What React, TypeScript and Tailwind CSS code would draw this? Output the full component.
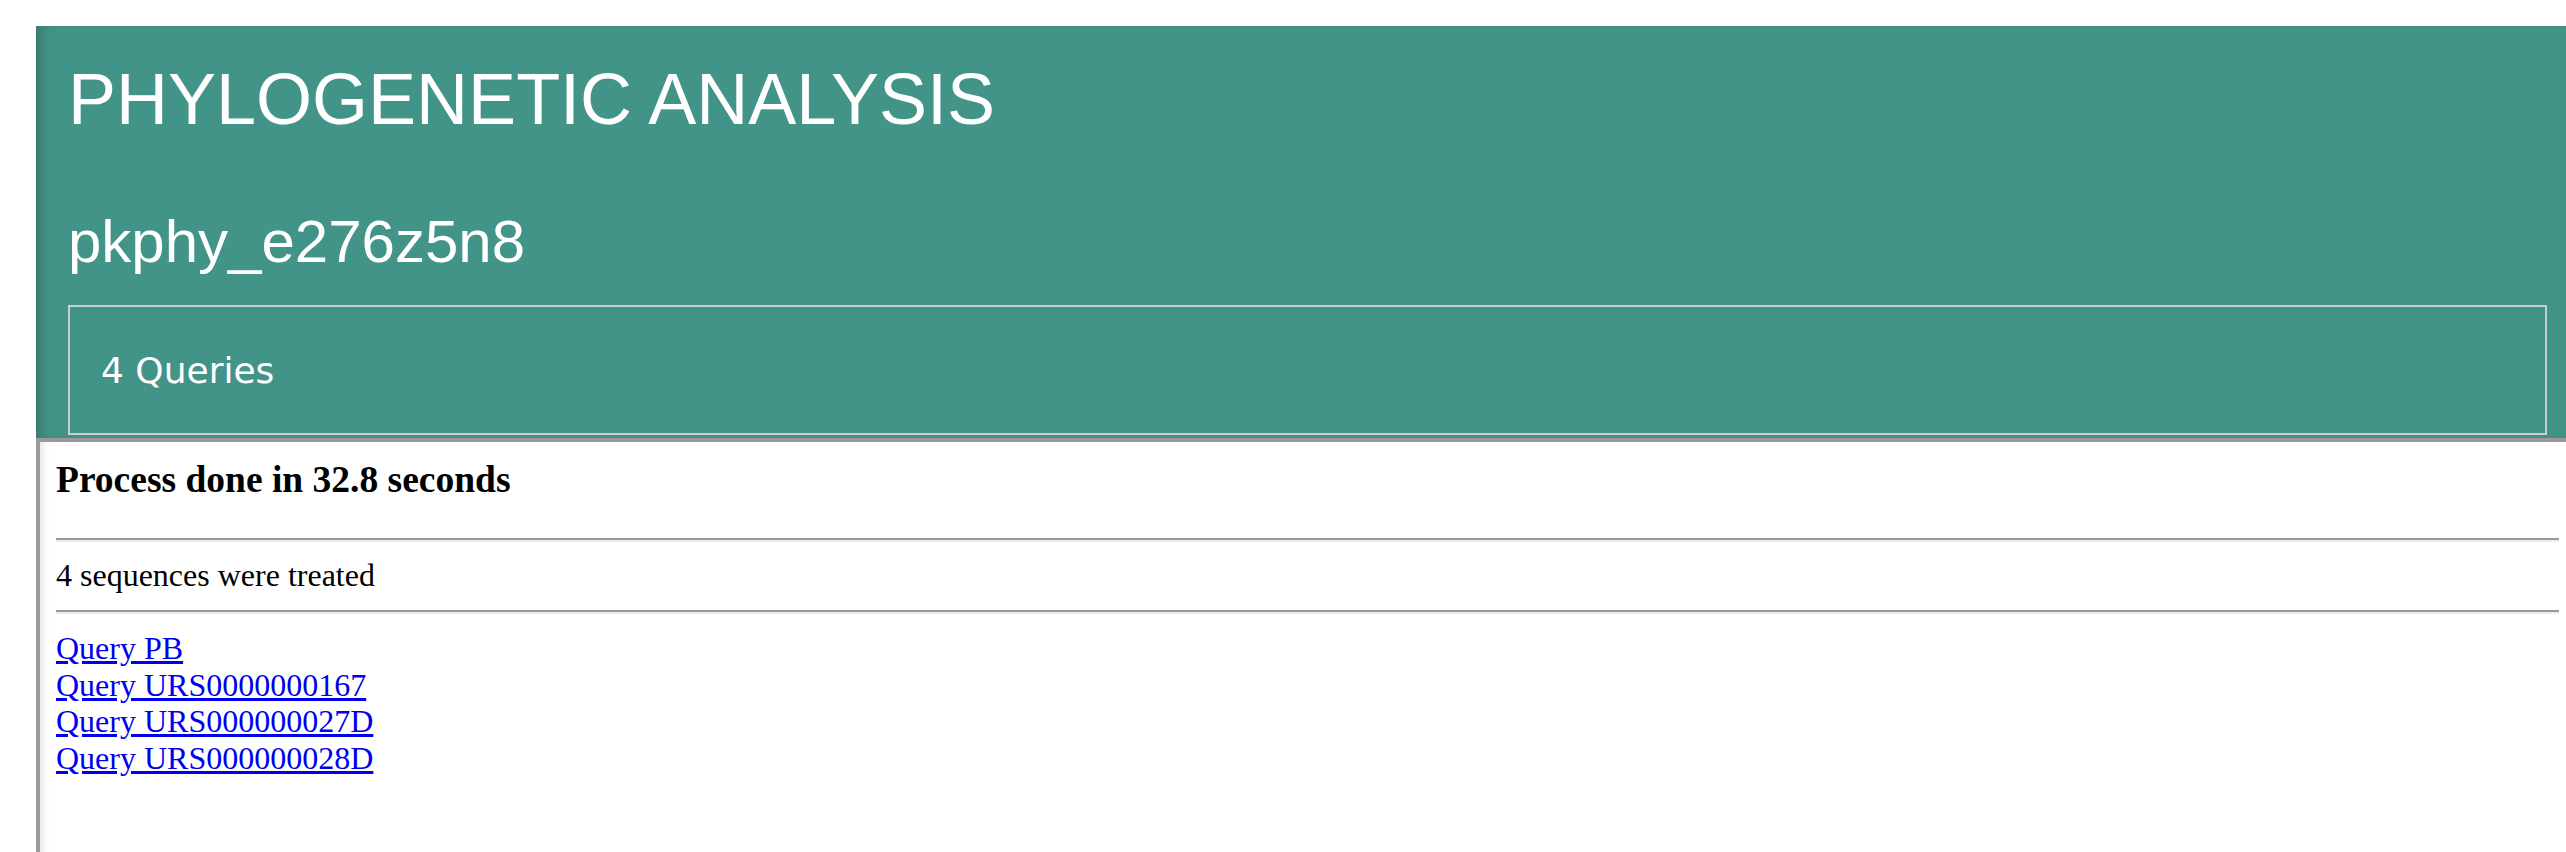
const queries = ['PB', 'URS0000000167', 'URS000000027D', 'URS000000028D'];

export default function App() {
  return (
    <div className="h-[852px] w-full overflow-hidden bg-white pl-[36px] pt-[26px]">
      <div className="w-[2539px]">
        {/* header */}
        <div
          className="bg-[#439488] pb-[3px] pl-[32px] pr-[28px] pt-[37px] text-white shadow-[inset_12px_0_14px_-8px_rgba(0,0,0,0.22)]"
          style={{ fontFamily: '"Liberation Sans", Arial, sans-serif' }}
        >
          <h1 className="text-[72px] leading-none font-normal">PHYLOGENETIC ANALYSIS</h1>
          <h2 className="mt-[77px] text-[60px] leading-none font-normal">pkphy_e276z5n8</h2>
          <div className="mt-[33px] border-2 border-[#cccccc] pb-[44px] pl-[31px] pt-[46px]">
            <div
              className="text-[36px] leading-none"
              style={{ fontFamily: '"DejaVu Sans", Verdana, sans-serif' }}
            >
              4 Queries
            </div>
          </div>
        </div>

        {/* results frame */}
        <div
          className="min-h-[420px] border-l-4 border-t-4 border-[#9a9a9a] px-[16px] pt-[16px] text-black shadow-[inset_8px_0_8px_-6px_rgba(0,0,0,0.12)]"
          style={{ fontFamily: '"Liberation Serif", "Times New Roman", serif' }}
        >
          <h3 className="text-[37.5px] leading-[43px] font-bold">Process done in 32.8 seconds</h3>
          <hr className="mt-[37px] h-[4px] border-0 border-t-2 border-b-2 border-t-[#9a9a9a] border-b-[#eeeeee]" />
          <div className="mt-[15px] text-[32px] leading-[37px]">4 sequences were treated</div>
          <hr className="mt-[16px] h-[4px] border-0 border-t-2 border-b-2 border-t-[#9a9a9a] border-b-[#eeeeee]" />
          <div className="mt-[16px] text-[32px] leading-[36.7px]">
            {queries.map((q) => (
              <div key={q}>
                <a href="#" className="text-[#0000ee] underline">
                  Query {q}
                </a>
              </div>
            ))}
          </div>
        </div>
      </div>
    </div>
  );
}
